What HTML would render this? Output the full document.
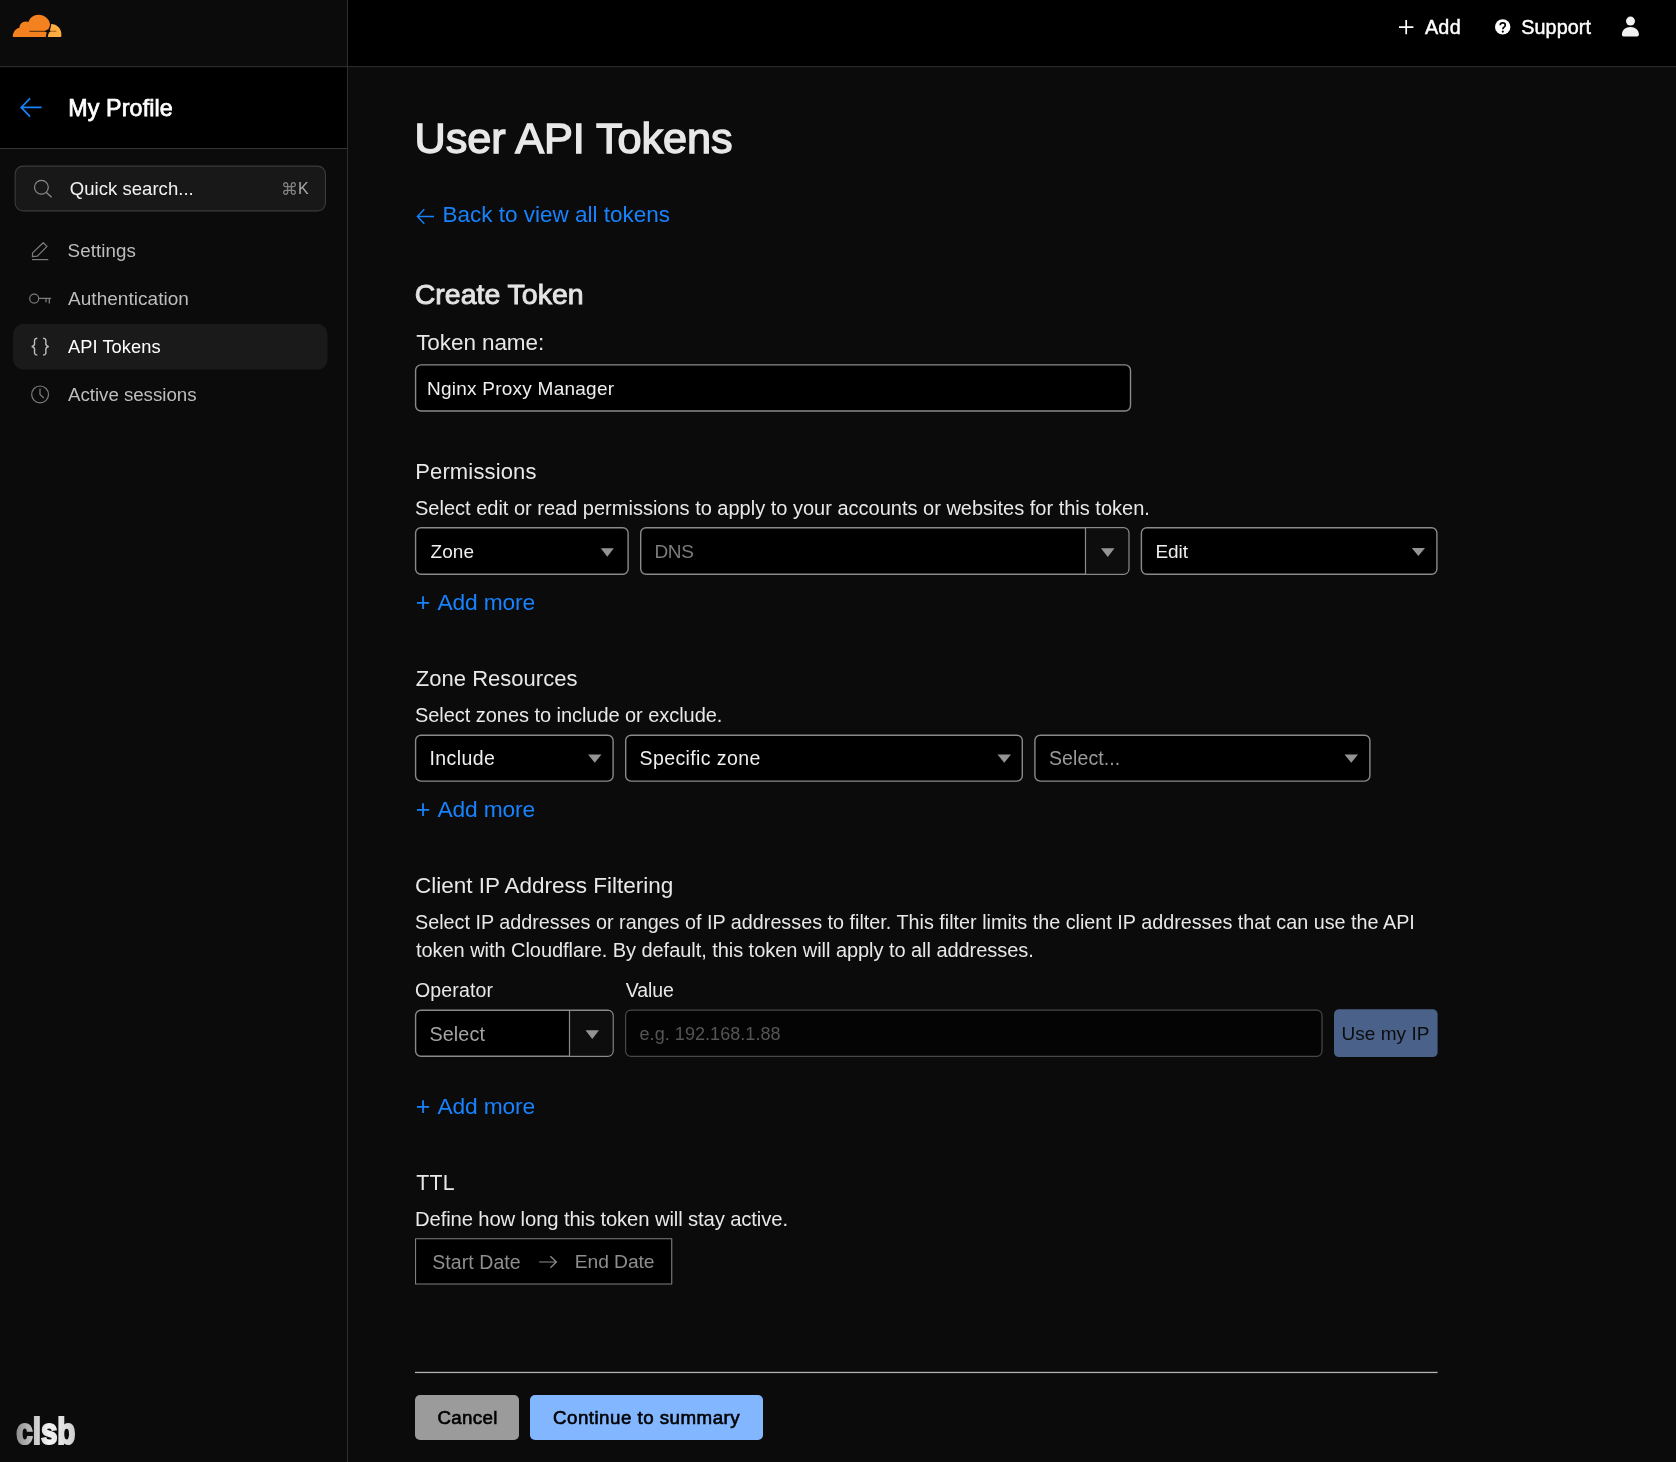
<!DOCTYPE html>
<html lang="en"><head><meta charset="utf-8"><title>User API Tokens | Cloudflare</title>
<style>
html,body{margin:0;padding:0}
body{width:1676px;height:1462px;overflow:hidden;background:#0b0b0b;font-family:"Liberation Sans","DejaVu Sans",sans-serif;position:relative}
.bg{position:absolute}
.ov{position:absolute;left:0;top:0;will-change:transform}
.tx{position:absolute;left:0;top:0;width:1676px;height:1462px;will-change:transform}
.t{position:absolute;display:block;margin:0;padding:0;border:0;background:none;font-family:inherit;font-weight:400;line-height:1;white-space:nowrap;text-decoration:none;text-align:left;cursor:default}
</style></head><body>
<div class="bg" style="left:348px;top:0;width:1328px;height:66px;background:#000"></div>
<div class="bg" style="left:0;top:67px;width:347px;height:81px;background:#000"></div>

<div class="bg" style="left:0;top:148px;width:347px;height:1px;background:#333"></div>
<div class="bg" style="left:347px;top:0;width:1px;height:1462px;background:#2f2f2f"></div>
<svg class="ov" width="1676" height="1462" viewBox="0 0 1676 1462"><rect x="0" y="66.15" width="1676" height="1" fill="#303030"/>
<path d="M12.9 37 C12.5 33.6 14.6 28.8 19.4 27.7 C19.6 24.3 22.4 21.5 26 21.6 C26.9 21.6 27.7 21.8 28.4 22.1 C29.9 17.8 33.7 14.8 38.4 14.8 C44.6 14.8 49.8 19.2 50.1 24.8 C49.8 26.8 48.4 29.4 47.2 31.4 C46.4 33 46 35 45.9 37 Z" fill="#f48120"/>
<path d="M51.2 24 C56.9 24 61.4 28.5 61.4 34.2 C61.4 35.2 61.300 36.1 61.1 37 H47.8 C47.9 35.4 48.3 33.9 49 32.5 C50.1 30.3 50.9 27.2 51.2 24 Z" fill="#fbad41"/>
<path d="M29.5 31.3 H56.2" stroke="#241505" stroke-width="0.8" fill="none"/>
<path d="M44.6 31.3 L48 29.2 L50.6 31.3 L48 33.2 Z" fill="#0b0b0b"/>
<path d="M50.6 31.3 H56.6" stroke="#e8861f" stroke-width="0.8" fill="none"/>
<path d="M1399 27.1H1413.4M1406.2 19.9V34.3" stroke="#fff" stroke-width="1.7" fill="none"/>
<circle cx="1502.7" cy="26.9" r="7.7" fill="#fff"/>
<path d="M1500.2 25.2 C1500.2 22.2 1505.3 22.2 1505.3 25.2 C1505.3 27.2 1502.8 27 1502.8 29.2" stroke="#000" stroke-width="1.7" fill="none"/><circle cx="1502.8" cy="31.6" r="1.1" fill="#000"/>
<circle cx="1630.5" cy="21.1" r="4.5" fill="#f2f2f2"/>
<path d="M1623.6 36.4 C1622.5 36.4 1621.9 35.7 1621.9 34.6 C1621.9 29.8 1625.6 26.9 1630.4 26.9 C1635.2 26.9 1638.9 29.8 1638.9 34.6 C1638.9 35.7 1638.3 36.4 1637.2 36.4 Z" fill="#f2f2f2"/>
<path d="M41.6 107.4H21.6M30.1 98.3L21.2 107.4L30.1 116.6" stroke="#1782fc" stroke-width="1.7" fill="none" stroke-linejoin="miter"/>
<rect x="15.15" y="166.15" width="310.30" height="44.70" rx="7.95" fill="#181818" stroke="#3c3c3c" stroke-width="1.1"/>
<circle cx="41.4" cy="187.3" r="6.9" stroke="#8c8c8c" stroke-width="1.2" fill="none"/><path d="M46.4 192.4L51.6 197.2" stroke="#8c8c8c" stroke-width="1.3" fill="none"/>
<rect x="13" y="324" width="314.5" height="45.5" rx="10" fill="#1a1a1a"/>
<path d="M43.2 242.7L47 246.4L37.4 256.1L32.4 256.7L32.6 252.9Z" stroke="#7c7c7c" stroke-width="1.2" fill="none" stroke-linejoin="round"/><path d="M32 259.6H48.3" stroke="#7c7c7c" stroke-width="1.2"/>
<circle cx="34.2" cy="298.6" r="4.5" stroke="#7c7c7c" stroke-width="1.2" fill="none"/><path d="M38.8 298.3H51.2M46 298.3V302.2M49.3 298.3V303.6" stroke="#7c7c7c" stroke-width="1.3" fill="none"/>
<path d="M37.3 338.2 C33.6 338.2 34.6 341.4 34.6 343.6 C34.6 345.6 33.6 346.4 31.6 346.6 C33.6 346.8 34.6 347.6 34.6 349.6 C34.6 351.8 33.6 355 37.3 355" stroke="#bdbdbd" stroke-width="1.4" fill="none"/>
<path d="M43.1 338.2 C46.800 338.2 45.800 341.4 45.800 343.6 C45.800 345.6 46.800 346.4 48.800 346.6 C46.800 346.8 45.800 347.6 45.800 349.6 C45.800 351.8 46.800 355 43.1 355" stroke="#bdbdbd" stroke-width="1.4" fill="none"/>
<circle cx="40.1" cy="394.4" r="8.4" stroke="#7c7c7c" stroke-width="1.2" fill="none"/><path d="M40 388.600V394.400L43.800 398" stroke="#7c7c7c" stroke-width="1.2" fill="none"/>
<path d="M434 216.500H418M424.300 209.300L417.400 216.500L424.300 223.800" stroke="#1782fc" stroke-width="1.4" fill="none"/>
<rect x="415.60" y="364.90" width="714.90" height="46.10" rx="5.50" fill="#000" stroke="#8a8a8a" stroke-width="1.4"/>
<rect x="415.60" y="527.70" width="212.50" height="46.60" rx="5.30" fill="#000" stroke="#8a8a8a" stroke-width="1.4"/>
<path d="M600.8 548.2H613.8L607.3 556.8Z" fill="#949494"/>
<rect x="640.70" y="527.70" width="488.20" height="46.60" rx="5.30" fill="#000" stroke="#8a8a8a" stroke-width="1.4"/><path d="M1085.5 528.4H1123.6Q1128.1999999999998 528.4 1128.1999999999998 533V569Q1128.1999999999998 573.6 1123.6 573.6H1085.5Z" fill="#0d0d0d"/><path d="M1085.5 527.7V574.3" stroke="#8a8a8a" stroke-width="1.2"/>
<path d="M1101 548.2H1114.5L1107.75 557Z" fill="#949494"/>
<rect x="1141.40" y="527.70" width="295.50" height="46.60" rx="5.30" fill="#000" stroke="#8a8a8a" stroke-width="1.4"/>
<path d="M1411.8 548H1425L1418.4 556Z" fill="#949494"/>
<rect x="415.60" y="735.20" width="197.50" height="45.90" rx="5.30" fill="#000" stroke="#8a8a8a" stroke-width="1.4"/>
<path d="M588 754.5H601.5L594.75 762.7Z" fill="#949494"/>
<rect x="625.70" y="735.20" width="396.60" height="45.90" rx="5.30" fill="#000" stroke="#8a8a8a" stroke-width="1.4"/>
<path d="M997.5 754.5H1011L1004.25 762.7Z" fill="#949494"/>
<rect x="1034.90" y="735.20" width="335.00" height="45.90" rx="5.30" fill="#000" stroke="#8a8a8a" stroke-width="1.4"/>
<path d="M1344.5 754.5H1358L1351.25 762.7Z" fill="#949494"/>
<rect x="415.60" y="1010.20" width="197.50" height="46.10" rx="5.30" fill="#000" stroke="#8a8a8a" stroke-width="1.4"/><path d="M569.5 1010.9H607.8Q612.4 1010.9 612.4 1015.5V1051Q612.4 1055.6 607.8 1055.6H569.5Z" fill="#0d0d0d"/><path d="M569.5 1010.2V1056.3" stroke="#8a8a8a" stroke-width="1.2"/>
<path d="M585.5 1030.2H599L592.25 1039Z" fill="#949494"/>
<rect x="625.60" y="1010.10" width="696.40" height="46.30" rx="5.40" fill="#040404" stroke="#484848" stroke-width="1.2"/>
<rect x="1334" y="1009.3" width="103.6" height="47.8" rx="5" fill="#4a6289"/>
<rect x="415.55" y="1238.75" width="256.20" height="45.30" rx="0.05" fill="#000" stroke="#808080" stroke-width="1.1"/>
<path d="M539.200 1262H556.200M550.400 1256.200L556.400 1262L550.400 1267.800" stroke="#8e8e8e" stroke-width="1.2" fill="none"/>
<rect x="415" y="1371.800" width="1022.600" height="1.300" fill="#b4b4b4"/>
<rect x="415" y="1395" width="104" height="45" rx="5" fill="#9b9b9b"/>
<rect x="530" y="1395" width="233" height="45" rx="5" fill="#82b6ff"/>
<defs><linearGradient id="wg" x1="0" x2="1" y1="0" y2="0"><stop offset="0" stop-color="#8e8e8e"/><stop offset="0.55" stop-color="#f4f4f4"/><stop offset="1" stop-color="#cfcfcf"/></linearGradient></defs>
<text x="0" y="0" transform="translate(16.2 1444) scale(0.8 1)" font-family="Liberation Sans, sans-serif" font-weight="700" font-size="37" fill="url(#wg)" stroke="url(#wg)" stroke-width="2.2" stroke-linejoin="miter">clsb</text></svg>
<div class="tx">
<a class="t" style="left:1424.9px;top:18px;font-size:19.75px;letter-spacing:0.3px;color:#ffffff;-webkit-text-stroke:0.45px #ffffff">Add</a>
<a class="t" style="left:1521.3px;top:18px;font-size:19.75px;letter-spacing:0.08px;color:#ffffff;-webkit-text-stroke:0.45px #ffffff">Support</a>
<h2 class="t" style="left:68.2px;top:97px;font-size:23.25px;letter-spacing:0.14px;color:#ffffff;-webkit-text-stroke:0.75px #ffffff">My Profile</h2>
<span class="t" style="left:69.8px;top:180px;font-size:18.5px;letter-spacing:0.04px;color:#f2f2f2">Quick search...</span>
<span class="t" style="left:298.0px;top:181px;font-size:16.0px;color:#a8a8a8">K</span>
<a class="t" style="left:67.6px;top:242px;font-size:18.75px;letter-spacing:0.06px;color:#bdbdbd">Settings</a>
<a class="t" style="left:68.0px;top:289px;font-size:19.0px;letter-spacing:0.04px;color:#bdbdbd">Authentication</a>
<a class="t" style="left:68.0px;top:338px;font-size:18.25px;letter-spacing:0.06px;color:#ffffff">API Tokens</a>
<a class="t" style="left:68.0px;top:386px;font-size:18.75px;letter-spacing:-0.05px;color:#bdbdbd">Active sessions</a>
<h1 class="t" style="left:414.5px;top:117px;font-size:43.25px;letter-spacing:-0.05px;color:#e8e8e8;-webkit-text-stroke:1.4px #e8e8e8">User API Tokens</h1>
<a class="t" style="left:442.4px;top:204px;font-size:22.5px;color:#1782fc">Back to view all tokens</a>
<h2 class="t" style="left:414.8px;top:280px;font-size:28.5px;letter-spacing:-0.02px;color:#e4e4e4;-webkit-text-stroke:0.9px #e4e4e4">Create Token</h2>
<label class="t" style="left:416.2px;top:332px;font-size:22.5px;letter-spacing:-0.08px;color:#e8e8e8">Token name:</label>
<span class="t" style="left:427.0px;top:379px;font-size:19.0px;letter-spacing:0.24px;color:#efefef">Nginx Proxy Manager</span>
<h3 class="t" style="left:415.2px;top:461px;font-size:22.0px;letter-spacing:0.15px;color:#e8e8e8">Permissions</h3>
<p class="t" style="left:415.0px;top:498px;font-size:20.0px;color:#e8e8e8">Select edit or read permissions to apply to your accounts or websites for this token.</p>
<span class="t" style="left:430.5px;top:542px;font-size:19.0px;letter-spacing:0.08px;color:#efefef">Zone</span>
<span class="t" style="left:654.5px;top:542px;font-size:19.0px;letter-spacing:-0.38px;color:#7c7c7c">DNS</span>
<span class="t" style="left:1155.5px;top:542px;font-size:19.0px;letter-spacing:-0.08px;color:#efefef">Edit</span>
<a class="t" style="left:437.5px;top:591px;font-size:22.75px;letter-spacing:-0.14px;color:#1782fc">Add more</a>
<h3 class="t" style="left:415.8px;top:668px;font-size:22.0px;letter-spacing:0.02px;color:#e8e8e8">Zone Resources</h3>
<p class="t" style="left:415.0px;top:705px;font-size:20.0px;letter-spacing:-0.05px;color:#e8e8e8">Select zones to include or exclude.</p>
<span class="t" style="left:429.5px;top:749px;font-size:19.5px;letter-spacing:0.42px;color:#efefef">Include</span>
<span class="t" style="left:639.5px;top:749px;font-size:19.5px;letter-spacing:0.4px;color:#efefef">Specific zone</span>
<span class="t" style="left:1049.0px;top:749px;font-size:19.5px;letter-spacing:0.09px;color:#9a9a9a">Select...</span>
<a class="t" style="left:437.5px;top:798px;font-size:22.75px;letter-spacing:-0.14px;color:#1782fc">Add more</a>
<h3 class="t" style="left:415.0px;top:875px;font-size:22.5px;letter-spacing:-0.01px;color:#e8e8e8">Client IP Address Filtering</h3>
<p class="t" style="left:415.0px;top:913px;font-size:19.75px;letter-spacing:0.01px;color:#e8e8e8">Select IP addresses or ranges of IP addresses to filter. This filter limits the client IP addresses that can use the API</p>
<p class="t" style="left:416.0px;top:940px;font-size:20.0px;letter-spacing:-0.05px;color:#e8e8e8">token with Cloudflare. By default, this token will apply to all addresses.</p>
<label class="t" style="left:415.0px;top:981px;font-size:19.5px;letter-spacing:0.14px;color:#e8e8e8">Operator</label>
<label class="t" style="left:625.8px;top:981px;font-size:19.5px;letter-spacing:-0.12px;color:#e8e8e8">Value</label>
<span class="t" style="left:429.5px;top:1025px;font-size:19.75px;letter-spacing:0.1px;color:#a4a4a4">Select</span>
<span class="t" style="left:639.5px;top:1025px;font-size:18.0px;letter-spacing:0.06px;color:#555555">e.g. 192.168.1.88</span>
<button class="t" style="left:1341.5px;top:1024px;font-size:19.0px;letter-spacing:0.03px;color:#0c0c0c">Use my IP</button>
<a class="t" style="left:437.5px;top:1095px;font-size:22.75px;letter-spacing:-0.14px;color:#1782fc">Add more</a>
<h3 class="t" style="left:416.2px;top:1173px;font-size:21.25px;letter-spacing:0.25px;color:#e8e8e8">TTL</h3>
<p class="t" style="left:415.0px;top:1209px;font-size:20.25px;letter-spacing:-0.12px;color:#e8e8e8">Define how long this token will stay active.</p>
<span class="t" style="left:432.2px;top:1253px;font-size:19.5px;letter-spacing:0.08px;color:#8e8e8e">Start Date</span>
<span class="t" style="left:574.8px;top:1252px;font-size:19.25px;letter-spacing:-0.07px;color:#8e8e8e">End Date</span>
<button class="t" style="left:437.5px;top:1409px;font-size:18.75px;letter-spacing:0.3px;color:#000000;-webkit-text-stroke:0.6px #000000">Cancel</button>
<button class="t" style="left:553.0px;top:1409px;font-size:18.75px;letter-spacing:0.47px;color:#000000;-webkit-text-stroke:0.6px #000000">Continue to summary</button>
<span class="t" style="left:415.8px;top:590px;font-size:25.0px;color:#1782fc;font-family:'Liberation Sans',sans-serif">+</span>
<span class="t" style="left:415.8px;top:797px;font-size:25.0px;color:#1782fc;font-family:'Liberation Sans',sans-serif">+</span>
<span class="t" style="left:415.8px;top:1094px;font-size:25.0px;color:#1782fc;font-family:'Liberation Sans',sans-serif">+</span>
<span class="t" style="left:281.1px;top:181px;font-size:17.0px;color:#828282;font-family:'DejaVu Sans',sans-serif">⌘</span>
</div>
</body></html>
